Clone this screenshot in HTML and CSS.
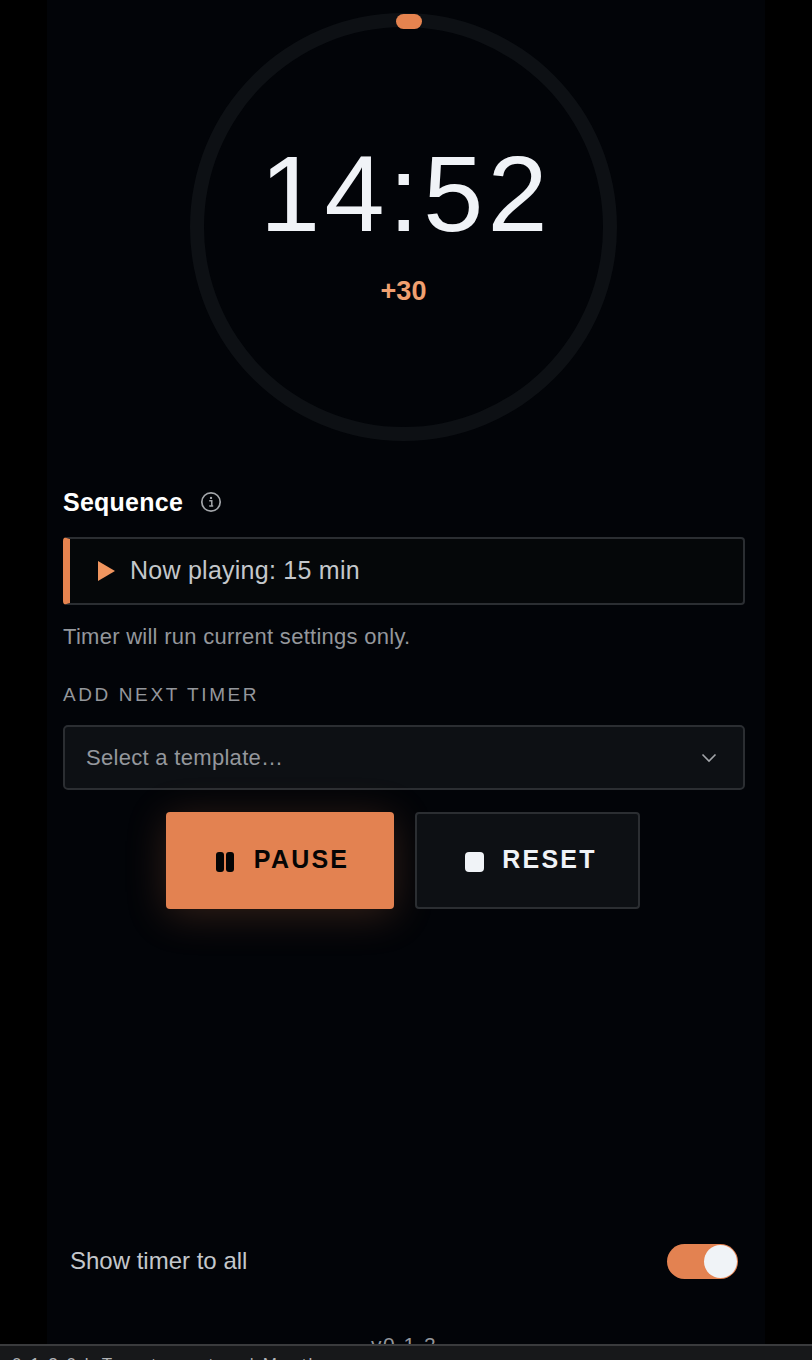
FILE: index.html
```html
<html>
    <head>
        <title>Timer</title>
        <link rel="stylesheet" href="styles.css">
    </head>
    <body>
        <div class="page">
            <div class="main">
                <div class="ring">
                    <div class="knob"></div>
                    <div class="time">14:52</div>
                    <div class="bonus">+30</div>
                </div>

                <div class="seqTitle">
                    <span>Sequence</span>
                    <svg class="info" viewBox="0 0 22 22" width="22" height="22">
                        <circle cx="11" cy="11" r="9.2" fill="none" stroke="#a3a6aa" stroke-width="1.7"/>
                        <circle cx="11" cy="6.9" r="1.2" fill="#a3a6aa"/>
                        <path d="M9.2 9.7h2.6v5.2M9.2 15h4" fill="none" stroke="#a3a6aa" stroke-width="1.5"/>
                    </svg>
                </div>

                <div class="playing">
                    <svg class="playIcon" viewBox="0 0 17 20" width="17" height="20">
                        <path d="M0 0L17 10L0 20Z" fill="#f0955f"/>
                    </svg>
                    <span>Now playing: 15 min</span>
                </div>
                <p class="hint">Timer will run current settings only.</p>

                <div class="addLabel">ADD NEXT TIMER</div>
                <div class="select">
                    <span>Select a template…</span>
                    <svg viewBox="0 0 16 10" width="16" height="10">
                        <path d="M1.5 1.5L8 8L14.5 1.5" fill="none" stroke="#a3a6aa" stroke-width="1.6"/>
                    </svg>
                </div>

                <div class="buttons">
                    <div class="btn pause">
                        <svg class="btnIcon" viewBox="0 0 18 20" width="18" height="20">
                            <rect x="0" y="0" width="8" height="20" rx="3" fill="#050505"/>
                            <rect x="10" y="0" width="8" height="20" rx="3" fill="#050505"/>
                        </svg>
                        <span>PAUSE</span>
                    </div>
                    <div class="btn reset">
                        <div class="btnIcon stopIcon"></div>
                        <span>RESET</span>
                    </div>
                </div>

                <div class="toggleRow">
                    <span>Show timer to all</span>
                    <div class="toggle"><div class="thumb"></div></div>
                </div>

                <div class="version">v0.1.2</div>
            </div>
        </div>
        <div class="bottomBar">0:1 2:0 k Tomato custom | Mantle</div>
    </body>
</html>
```
FILE: styles.css
```css
*{
    margin: 0;
    padding: 0;
    box-sizing: border-box;
}
html, body{
    height: 1360px;
    overflow: hidden;
    background: #000;
    font-family: "Liberation Sans", Arial, sans-serif;
}
.page{
    height: 1344px;
    padding: 0 47px 0 47px;
    overflow: hidden;
}
.main{
    height: 1344px;
    overflow: hidden;
    background: #020408;
    padding: 13px 20px 0 16px;
    display: flex;
    flex-direction: column;
}
.main > *{
    flex-shrink: 0;
}
.ring{
    position: relative;
    width: 427px;
    height: 428px;
    margin-right: 1px;
    border: 14px solid #0d1014;
    border-radius: 50%;
    align-self: center;
    display: flex;
    flex-direction: column;
    align-items: center;
}
.knob{
    position: absolute;
    top: -13px;
    left: 192px;
    width: 26px;
    height: 15px;
    background: #e5834f;
    border-radius: 8px;
}
.time{
    margin-top: 103px;
    padding-left: 5px;
    font-size: 108px;
    line-height: 128px;
    letter-spacing: 4.3px;
    color: #f0f3f7;
}
.bonus{
    margin-top: 17px;
    font-size: 27px;
    line-height: 32px;
    font-weight: bold;
    color: #f0a070;
}
.seqTitle{
    margin-top: 46px;
    display: flex;
    align-items: center;
    gap: 17px;
    font-size: 25px;
    line-height: 30px;
    font-weight: bold;
    letter-spacing: 0.25px;
    color: #fff;
}
.playing{
    margin-top: 20px;
    height: 68px;
    display: flex;
    align-items: center;
    gap: 15px;
    padding-left: 28px;
    border: 2px solid #2b2e32;
    border-left: 7px solid #e5834f;
    border-radius: 4px;
    background: #050709;
    font-size: 25px;
    letter-spacing: 0.25px;
    color: #c4c7cb;
}
.playing span{
    margin-bottom: 2px;
}
.hint{
    margin-top: 19px;
    font-size: 22px;
    line-height: 26px;
    letter-spacing: 0.27px;
    color: #94979c;
}
.addLabel{
    margin-top: 34px;
    font-size: 19px;
    line-height: 22px;
    letter-spacing: 2.6px;
    color: #94979c;
}
.select{
    margin-top: 19px;
    height: 65px;
    display: flex;
    align-items: center;
    justify-content: space-between;
    padding: 0 26px 0 21px;
    background: #0d1014;
    border: 2px solid #2b2e32;
    border-radius: 5px;
    font-size: 22px;
    letter-spacing: 0.3px;
    color: #94979c;
}
.buttons{
    margin-top: 22px;
    padding-right: 2px;
    display: flex;
    justify-content: center;
    gap: 21px;
}
.btn{
    height: 97px;
    display: flex;
    align-items: center;
    justify-content: center;
    border-radius: 4px;
    font-size: 25px;
    font-weight: bold;
    letter-spacing: 2.2px;
}
.btn span{
    margin-bottom: 2px;
}
.btnIcon{
    margin-top: 3px;
}
.pause{
    width: 228px;
    padding-left: 5px;
    gap: 20px;
    background: #e38251;
    color: #050505;
    box-shadow: 0 6px 40px rgba(229, 131, 79, 0.22);
}
.reset{
    width: 225px;
    padding-left: 7px;
    gap: 18px;
    background: #0d1014;
    border: 2px solid #2b2e32;
    color: #f0f3f7;
}
.stopIcon{
    width: 19px;
    height: 20px;
    border-radius: 4px;
    background: #f0f3f7;
}
.toggleRow{
    margin-top: 335px;
    padding: 0 7px;
    display: flex;
    align-items: center;
    justify-content: space-between;
    font-size: 24px;
    color: #c4c7cb;
}
.toggleRow span{
    margin-bottom: 2px;
}
.toggle{
    width: 71px;
    height: 35px;
    border-radius: 18px;
    background: #e38251;
    padding: 1px;
    display: flex;
    justify-content: flex-end;
}
.thumb{
    width: 33px;
    height: 33px;
    border-radius: 50%;
    background: #f0f3f7;
}
.version{
    margin-top: 54px;
    text-align: center;
    font-size: 21px;
    letter-spacing: 1.5px;
    line-height: 24px;
    color: #94979c;
}
.bottomBar{
    height: 16px;
    background: #17181a;
    border-top: 2px solid #3a3b3d;
    padding: 9px 0 0 12px;
    overflow: hidden;
    font-size: 17px;
    letter-spacing: 2px;
    line-height: 20px;
    color: #b0b2b5;
    white-space: nowrap;
}
```
